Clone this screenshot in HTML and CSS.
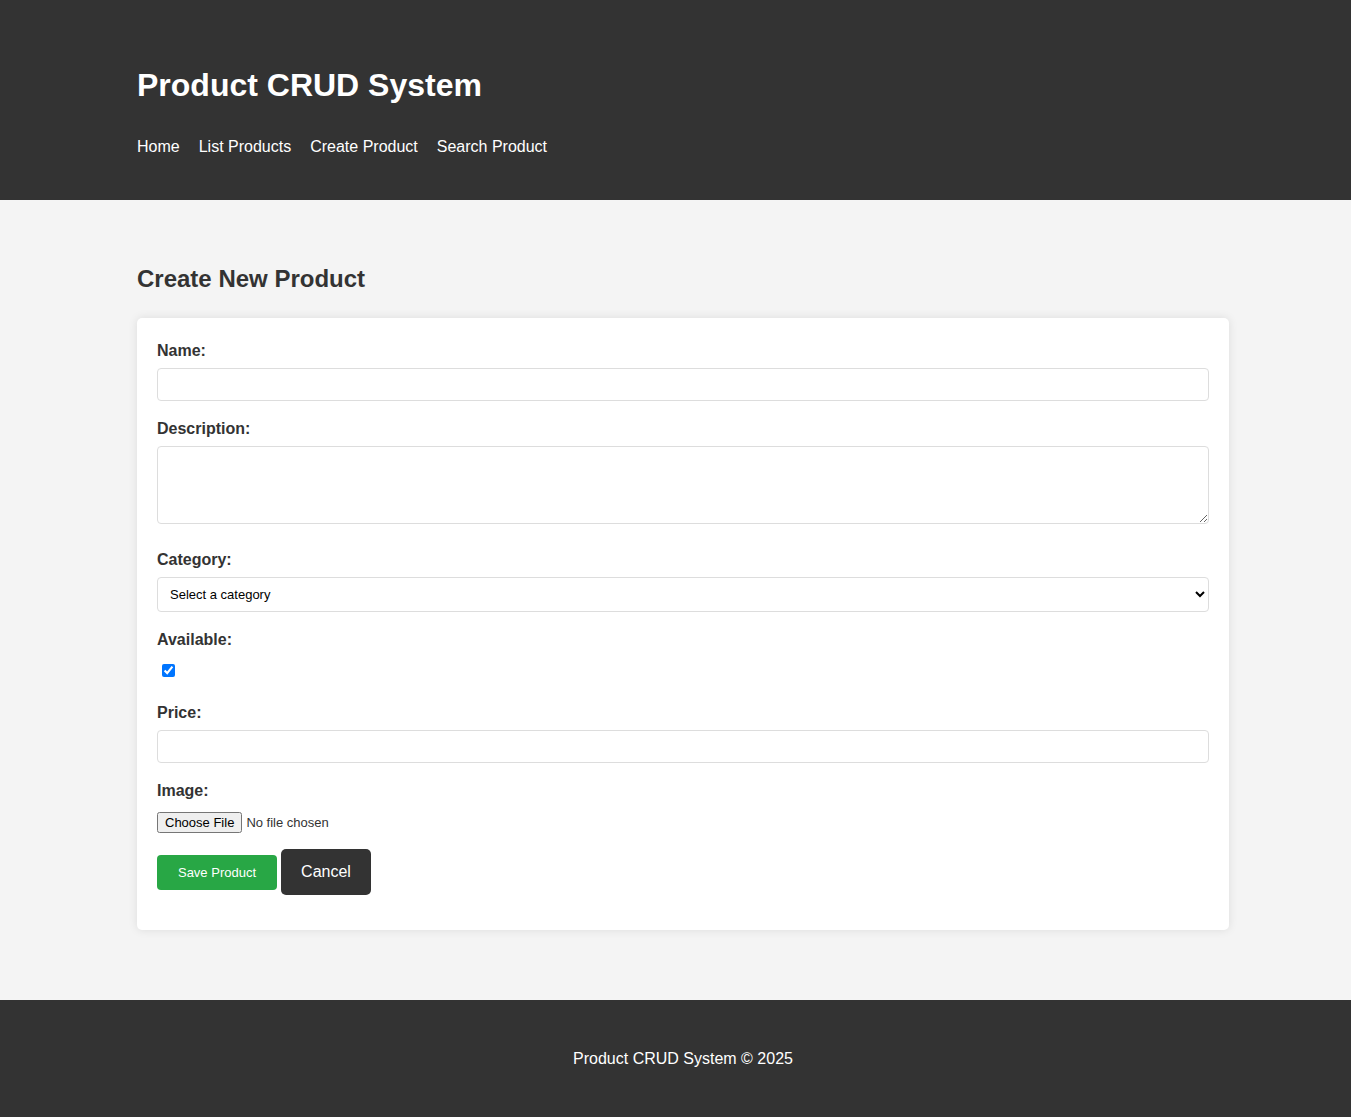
FILE: index.html
```html
<!DOCTYPE html>
<html lang="en">
<head>
<meta charset="utf-8">
<title>Create Product</title>
<link rel="stylesheet" href="styles.css">
</head>
<body>
<header class="site-header">
  <div class="container">
    <h1 class="site-title">Product CRUD System</h1>
    <nav class="nav">
      <a href="#">Home</a>
      <a href="#">List Products</a>
      <a href="#">Create Product</a>
      <a href="#">Search Product</a>
    </nav>
  </div>
</header>
<main class="main">
  <div class="container">
    <h2 class="page-title">Create New Product</h2>
    <form class="card">
      <div class="form-group">
        <label class="label" for="name">Name:</label>
        <input class="field" id="name" type="text">
      </div>
      <div class="form-group form-group-area">
        <label class="label" for="desc">Description:</label>
        <textarea class="field area" id="desc"></textarea>
      </div>
      <div class="form-group">
        <label class="label" for="cat">Category:</label>
        <select class="field select" id="cat">
          <option>Select a category</option>
        </select>
      </div>
      <div class="form-group form-group-check">
        <label class="label" for="avail">Available:</label>
        <input class="check" id="avail" type="checkbox" checked>
      </div>
      <div class="form-group">
        <label class="label" for="price">Price:</label>
        <input class="field" id="price" type="text">
      </div>
      <div class="form-group form-group-file">
        <label class="label" for="img">Image:</label>
        <input class="file" id="img" type="file">
      </div>
      <div class="actions">
        <button class="btn btn-save" type="button">Save Product</button>
        <a class="btn btn-cancel" href="#">Cancel</a>
      </div>
    </form>
  </div>
</main>
<footer class="site-footer">
  <div class="container">
    <p class="footer-text">Product CRUD System &copy; 2025</p>
  </div>
</footer>
</body>
</html>
```
FILE: styles.css
```css
* { box-sizing: border-box; }
html, body { margin: 0; padding: 0; }
body {
  font-family: "Liberation Sans", Arial, sans-serif;
  background: #f4f4f4;
  color: #333;
}
.container {
  width: 1092px;
  margin: 0 122px 0 137px;
}
.site-header {
  background: #333;
  color: #fff;
  padding: 67px 0 44px;
}
.site-title {
  margin: 0;
  font-size: 32px;
  line-height: 37px;
  font-weight: bold;
}
.nav {
  display: flex;
  gap: 19px;
  margin-top: 34px;
  line-height: 18px;
}
.nav a {
  color: #fff;
  text-decoration: none;
  font-size: 16px;
}
.main {
  padding: 65px 0 70px;
}
.page-title {
  margin: 0 0 25px;
  font-size: 24px;
  line-height: 28px;
  font-weight: bold;
  color: #333;
}
.card {
  background: #fff;
  border-radius: 5px;
  box-shadow: 0 0 10px rgba(0,0,0,0.1);
  padding: 22px 20px 35px;
}
.form-group {
  margin-bottom: 17px;
}
.form-group-area { margin-bottom: 25px; }
.form-group-check { margin-bottom: 25px; }
.label {
  display: block;
  font-weight: bold;
  font-size: 16px;
  line-height: 22px;
  margin-bottom: 6px;
}
.field {
  display: block;
  width: 100%;
  height: 33px;
  border: 1px solid #ddd;
  border-radius: 4px;
  padding: 8px;
  font-family: inherit;
  font-size: 14px;
  background: #fff;
}
.area {
  height: 78px;
  margin-top: 1px;
  resize: vertical;
}
.select {
  height: 35px;
  font-size: 13px;
  color: #000;
  padding: 0 8px;
}
.check {
  display: block;
  width: 13px;
  height: 13px;
  margin: 13px 0 0 5px;
  accent-color: #0075ff;
}
.form-group-file { margin-bottom: 16px; }
.file {
  display: block;
  margin-top: 10px;
  font-family: "Liberation Sans", Arial, sans-serif;
  font-size: 13px;
  color: #333;
}
.actions {
  display: flex;
  align-items: center;
  gap: 4px;
}
.btn {
  display: inline-block;
  border: none;
  color: #fff;
  text-decoration: none;
  font-family: inherit;
  cursor: pointer;
}
.btn-save {
  background: #28a745;
  font-size: 13px;
  line-height: 15px;
  padding: 10px 20px;
  width: 120px;
  border-radius: 4px;
}
.btn-cancel {
  background: #333;
  font-size: 16px;
  line-height: 18px;
  padding: 14px 20px;
  width: 90px;
  text-align: center;
  border-radius: 5px;
}
.site-footer {
  background: #333;
  color: #fff;
  text-align: center;
  padding: 50px 0 49px;
}
.footer-text {
  margin: 0;
  font-size: 16px;
  line-height: 18px;
}
```
